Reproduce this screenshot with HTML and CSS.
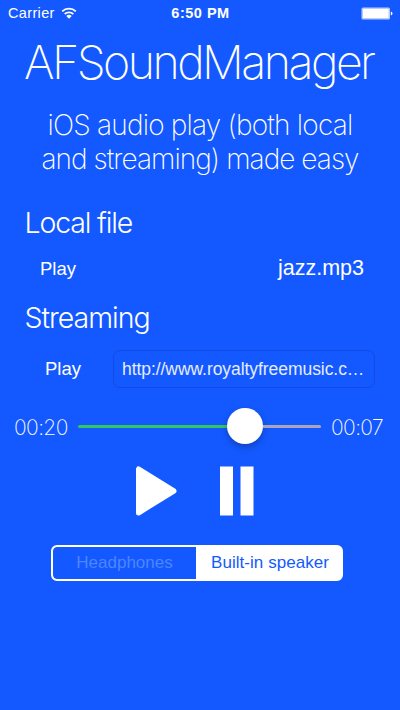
FILE: index.html
```html
<!DOCTYPE html>
<html lang="en">
<head>
<meta charset="utf-8">
<title>AFSoundManager</title>
<link rel="stylesheet" href="styles.css">
</head>
<body>
<main class="screen">
  <header class="status">
    <span class="carrier">Carrier
      <svg class="wifi" width="16" height="12" viewBox="0 0 16 12"><path d="M1.2 4.3a9.8 9.8 0 0 1 13.6 0M3.7 7a6.3 6.3 0 0 1 8.6 0" fill="none" stroke="#fff" stroke-width="1.8"/><path d="M5.3 9a3.9 3.9 0 0 1 5.4 0L8 11.7z" fill="#fff"/></svg>
    </span>
    <span class="clock">6:50 PM</span>
    <svg class="battery" width="32" height="13" viewBox="0 0 32 13"><rect x=".5" y=".5" width="28.5" height="12" rx="1.5" fill="#b9ccff"/><rect x="2" y="2" width="25.5" height="9" rx=".5" fill="#fff"/><path d="M29.8 4.5q1.7.4 1.7 2t-1.7 2z" fill="#fff"/></svg>
  </header>
  <h1 class="title"><span>AFSoundManager</span></h1>
  <p class="tagline"><span class="line-one">iOS audio play (both local</span><br><span class="line-two">and streaming) made easy</span></p>
  <h2 class="heading local-heading"><span>Local file</span></h2>
  <div class="row local-row"><span class="play">Play</span><span class="file">jazz.mp3</span></div>
  <h2 class="heading stream-heading"><span>Streaming</span></h2>
  <div class="row stream-row"><span class="play">Play</span><div class="url"><span>http://www.royaltyfreemusic.c…</span></div></div>
  <div class="progress">
    <span class="time">00:20</span>
    <div class="slider"><div class="elapsed"></div><div class="knob"></div><div class="remaining"></div></div>
    <span class="time">00:07</span>
  </div>
  <div class="controls">
    <svg width="42" height="50" viewBox="0 0 42 50"><path d="M3.500 3v44L39 25z" fill="#fff" stroke="#fff" stroke-width="5" stroke-linejoin="round"/></svg>
    <svg width="34" height="50" viewBox="0 0 34 50"><path d="M0 .5h13v49H0zM20.500.5h13v49h-13z" fill="#fff"/></svg>
  </div>
  <div class="segments"><div class="segment"><span class="off">Headphones</span></div><div class="segment selected"><span>Built-in speaker</span></div></div>
</main>
</body>
</html>
```

FILE: styles.css
```css
* { box-sizing: border-box; }
body { margin: 0; background: #1459ff; color: #fff; font-family: "Liberation Sans", sans-serif; }
.screen { width: 400px; height: 710px; overflow: hidden; background: #1459ff; white-space: nowrap; }
h1, h2, p { margin: 0; }
.title, .tagline, .heading, .time { font-family: Inter, sans-serif; font-weight: 200; }
.status { height: 26px; padding: 0 7px 0 8px; display: grid; grid-template-columns: 1fr auto 1fr; align-items: center; font-size: 14.500px; line-height: 26px; }
.carrier { display: flex; align-items: center; gap: 6px; letter-spacing: .35px; }
.clock { font-weight: 700; letter-spacing: .5px; }
.battery { justify-self: end; }
.title { height: 72px; padding-left: 24px; line-height: 73px; font-size: 46.500px; letter-spacing: -2.550px; }
.tagline { margin-top: 10px; line-height: 34px; text-align: center; font-size: 28px; }
.line-one { letter-spacing: -.8px; }
.line-two { letter-spacing: -.95px; }
.heading { padding-left: 24.500px; font-size: 28.500px; font-weight: 300; letter-spacing: -1.150px; line-height: 40px; }
.local-heading { margin-top: 27px; }
.row { display: flex; align-items: center; justify-content: space-between; }
.play { font-size: 18.500px; padding-top: 2px; }
.local-row { height: 40px; margin-top: 5px; padding: 0 36px 0 40px; }
.file { font-size: 21.500px; }
.stream-heading { margin-top: 10px; letter-spacing: -1px; }
.stream-row { height: 38px; margin-top: 12px; padding: 0 25px 0 45px; }
.stream-row .play { padding-top: 0; }
.url { width: 262px; height: 38px; border: 1px solid #104ddf; border-radius: 7px; padding-left: 8px; font-size: 17.500px; letter-spacing: -.06px; line-height: 37px; color: #e4ecff; }
.progress { height: 40px; margin-top: 18px; padding: 0 15px 0 14px; display: flex; align-items: center; justify-content: space-between; }
.time { width: 54px; font-size: 21px; letter-spacing: -.6px; padding-top: 2px; }
.slider { width: 243px; height: 36px; display: flex; align-items: center; }
.elapsed { width: 149px; height: 3px; margin-top: 1px; border-radius: 2px 0 0 2px; background: #35c75f; }
.knob { width: 36px; height: 36px; margin-top: -1px; border-radius: 50%; background: #fff; box-shadow: 0 3px 7px #0004; }
.remaining { flex: 1; height: 3px; margin-top: 1px; border-radius: 0 2px 2px 0; background: #aaa6b7; }
.controls { height: 50px; margin: 20px 0 0 135px; display: flex; gap: 43px; }
.segments { width: 292px; height: 36px; margin: 29px 0 0 51px; display: flex; border: 2px solid #fff; border-radius: 6px; overflow: hidden; background: #fff; font-size: 17px; line-height: 32px; text-align: center; }
.segment { width: 143px; border-radius: 4px 0 0 4px; background: #1459ff; }
.off { color: #4d85ff; }
.segments .selected { flex: 1; padding-left: 3px; border-radius: 0; background: #fff; color: #1459ff; letter-spacing: .05px; }
```
